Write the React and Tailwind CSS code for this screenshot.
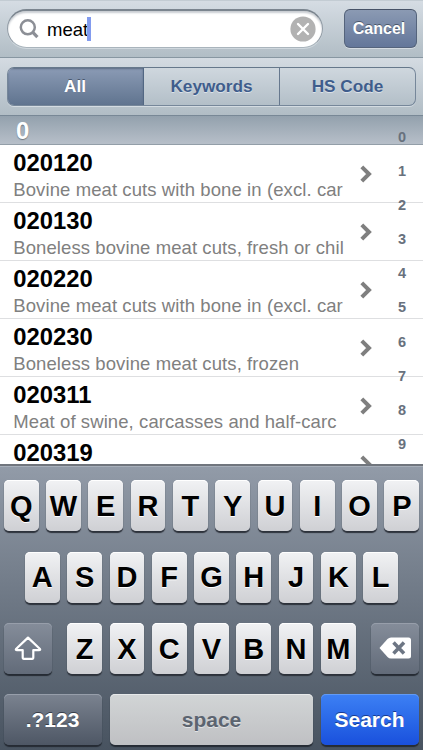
import React from 'react';

const rows = [
  ['020120', 'Bovine meat cuts with bone in (excl. car'],
  ['020130', 'Boneless bovine meat cuts, fresh or chil'],
  ['020220', 'Bovine meat cuts with bone in (excl. car'],
  ['020230', 'Boneless bovine meat cuts, frozen'],
  ['020311', 'Meat of swine, carcasses and half-carc'],
  ['020319', ''],
];

function Key({ children }) {
  return (
    <div className="flex h-[51px] w-[34.8px] shrink-0 items-center justify-center rounded-[5px] bg-linear-to-b from-[#f1f2f4] to-[#cfd0d4] pt-[2px] text-[29px] font-bold text-black [box-shadow:inset_0_1px_0_#fff,0_1.5px_1px_#2d323b] [text-shadow:0_1px_0_#fff]">
      {children}
    </div>
  );
}

function Keys({ letters }) {
  return (
    <div className="flex gap-[7.5px]">
      {letters.split('').map((l) => (
        <Key key={l}>{l}</Key>
      ))}
    </div>
  );
}

function SearchBar() {
  return (
    <div className="flex h-[58px] shrink-0 items-start border-b border-[#8796a1] bg-linear-to-b from-[#d6dde4] to-[#b1bdc5] pt-[9px] pl-[7px] [box-shadow:inset_0_1px_0_#c3ccd3]">
      <div className="flex h-[39px] w-[316px] items-center rounded-full border border-t-2 border-[#909ba5] border-t-[#7b858f] border-b-[#a9b4bc] bg-white pr-[6px] pl-[11px] [box-shadow:inset_0_2px_2px_#c9cdd2,0_1px_0_#d0d8de]">
        <svg className="mt-[-1px] h-5 w-5 shrink-0" viewBox="0 0 20 20" fill="none" stroke="#8c8f96">
          <circle cx="8.8" cy="8.3" r="7" strokeWidth="2.5" />
          <path d="M13.6 13.2 18.4 18.2" strokeWidth="3.2" />
        </svg>
        <span className="ml-[8px] pt-[1px] text-[18.5px] leading-6 text-black">meat</span>
        <span className="-ml-px h-6 w-[4px] bg-[#829bee]" />
        <svg className="ml-auto h-[26px] w-[26px]" viewBox="0 0 26 26">
          <circle cx="13" cy="13" r="12.6" fill="#b2b2b2" />
          <path d="M8 8 18 18M18 8 8 18" stroke="#fff" strokeWidth="2.4" strokeLinecap="round" />
        </svg>
      </div>
      <div className="ml-[20.5px] flex h-[39px] w-[73px] items-center justify-center rounded-[6px] border border-[#55647c] border-t-[#465267] bg-linear-to-b from-[#8b9ab3] to-[#64779a] pr-[2px] text-[16px] font-bold text-white [box-shadow:0_1px_0_#d4dbe1] [text-shadow:0_-1px_0_#4a576b]">
        Cancel
      </div>
    </div>
  );
}

function Scope() {
  return (
    <div className="h-[57px] shrink-0 bg-linear-to-b from-[#d4dbe2] to-[#b1bdc5] px-[7px] pt-[9px]">
      <div className="flex h-[39px] overflow-hidden rounded-[7px] border border-[#76879a] border-t-[#66788b] bg-linear-to-b from-[#cfd7de] to-[#b3bfc8] text-[17.2px] font-bold text-[#3f5d8c] [box-shadow:0_1px_0_#d4dce2] [text-shadow:0_1px_0_#dce2e8]">
        <div className="flex w-[136px] items-center justify-center border-r border-[#526783] bg-linear-to-b from-[#8b9bb5] to-[#60748f] pr-[1px] text-white [box-shadow:inset_0_1px_2px_#5b6b82] [text-shadow:0_-1px_0_#4b5a70]">All</div>
        <div className="flex w-[136px] items-center justify-center border-r border-[#66788e]">Keywords</div>
        <div className="flex flex-1 items-center justify-center">HS Code</div>
      </div>
    </div>
  );
}

function Row({ code, text }) {
  return (
    <div className="flex h-[58.1px] shrink-0 items-start border-b border-[#dedfe1] pl-[13.3px]">
      <div className="w-[347px]">
        <div className="h-[33.5px] pt-[1px] text-[23.8px] leading-[33.5px] font-bold text-black">{code}</div>
        <div className="text-[18.5px] leading-[22px] tracking-[0.09px] whitespace-nowrap text-[#808080]">{text}</div>
      </div>
      <svg className="mt-[20px] h-[18px] w-3" viewBox="0 0 12 18" fill="none" stroke="#7f7f7f" strokeWidth="4">
        <path d="M1.8 1.8 9 9 1.8 16.2" />
      </svg>
    </div>
  );
}

function Keyboard() {
  const dark = 'flex items-center justify-center rounded-[5px] bg-linear-to-b text-white [box-shadow:inset_0_1px_0_#979eaa,0_2px_1px_#252b34]';
  return (
    <div className="flex h-[286px] shrink-0 flex-col items-center border-t-2 border-[#70757d] bg-linear-to-b from-[#929ba8] to-[#485360] pt-[14px] [box-shadow:inset_0_1px_0_#a7afba]">
      <Keys letters="QWERTYUIOP" />
      <div className="mt-[20.5px]"><Keys letters="ASDFGHJKL" /></div>
      <div className="mt-[20.3px] flex w-[415px] justify-between">
        <div className={dark + ' h-[51px] w-[48px] from-[#858d9a] to-[#626b79]'}>
          <svg className="h-[26px] w-[28px]" viewBox="0 0 28 26" fill="none" stroke="#fff" strokeWidth="2.2" strokeLinejoin="round">
            <path d="M14 2.6 2 14Q1.3 15.2 3 15.2H8.7V22.2Q8.7 23.8 9.9 23.8H18.1Q19.3 23.8 19.3 22.2V15.2H25Q26.7 15.2 26 14Z" />
          </svg>
        </div>
        <Keys letters="ZXCVBNM" />
        <div className={dark + ' h-[51px] w-[48px] from-[#858d9a] to-[#626b79]'}>
          <svg className="h-[22px] w-[34px]" viewBox="0 0 34 22">
            <path d="M1.5 11 9.5 2Q11 .5 13 .5H30.5Q33 .5 33 3V19Q33 21.5 30.5 21.5H13Q11 21.5 9.5 20Z" fill="#fff" />
            <path d="M15.5 5.5 26 16.5M26 5.5 15.5 16.5" stroke="#6d7684" strokeWidth="3.5" />
          </svg>
        </div>
      </div>
      <div className="mt-[20.2px] flex h-[51px] w-[415px] gap-[8px] text-[21px] font-bold">
        <div className={dark + ' w-[98px] from-[#7b8390] to-[#4e5765] pr-[1px] [text-shadow:0_-1px_0_#373e49]'}>.?123</div>
        <div className="flex flex-1 items-center justify-center rounded-[5px] bg-linear-to-b from-[#d2d5d6] to-[#bfc0c3] pt-[1px] text-[#5c6470] [box-shadow:inset_0_1px_0_#e7e9ea,0_2px_1px_#252b34] [text-shadow:0_1px_0_#e2e4e6]">space</div>
        <div className="flex w-[98px] items-center justify-center rounded-[5px] bg-linear-to-b from-[#3d80f4] to-[#1a50dd] pr-[1px] text-white [box-shadow:inset_0_1px_0_#629af5,0_2px_1px_#252b34] [text-shadow:0_-1px_0_#173a91]">Search</div>
      </div>
    </div>
  );
}

export default function App() {
  return (
    <div className="flex h-[750px] w-[423px] flex-col overflow-hidden bg-white font-['Liberation_Sans',Arial,sans-serif]">
      <SearchBar />
      <Scope />
      <div className="relative flex h-[349px] shrink-0 flex-col overflow-hidden">
        <div className="flex h-[30px] shrink-0 items-center border-t border-b border-t-[#788896] border-b-[#939ea8] bg-linear-to-b from-[#93a1ad] to-[#b7bfc9] pt-[1px] pl-[16px] text-[23.8px] font-bold text-white [text-shadow:0_1px_1px_#6e7780]">0</div>
        {rows.map(([code, text]) => (
          <Row key={code} code={code} text={text} />
        ))}
        <div className="absolute top-[5px] right-[15px] flex w-3 flex-col items-center text-[14.5px] leading-[34.1px] font-bold text-[#68717d]">
          {'0123456789'.split('').map((n) => (
            <span key={n}>{n}</span>
          ))}
        </div>
      </div>
      <Keyboard />
    </div>
  );
}
